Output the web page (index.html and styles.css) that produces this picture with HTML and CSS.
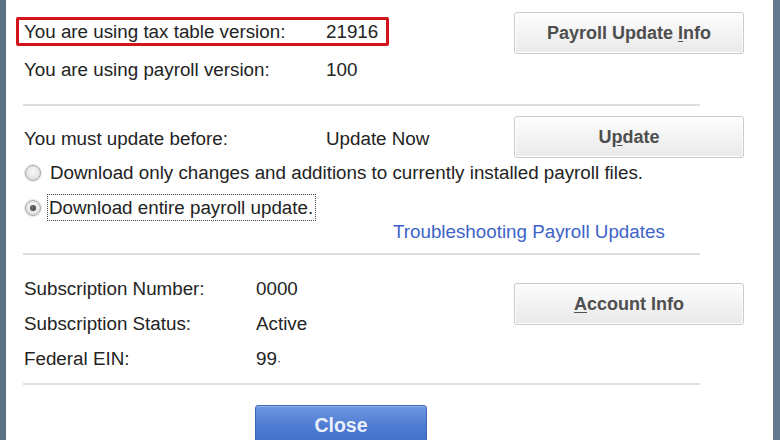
FILE: index.html
```html
<!DOCTYPE html>
<html>
<head>
<meta charset="utf-8">
<link rel="stylesheet" href="styles.css">
</head>
<body>
<div class="window">
  <div class="edge"></div>
  <div class="panel">
    <section class="sec sec1">
      <div class="col">
        <div class="row hl"><span class="lbl">You are using tax table version:</span><span>21916</span></div>
        <div class="row r2"><span class="lbl">You are using payroll version:</span><span>100</span></div>
      </div>
      <button class="btn b1">Payroll Update <u>I</u>nfo</button>
    </section>
    <div class="sep"></div>
    <section class="sec sec2">
      <div class="col">
        <div class="row ra"><span class="lbl">You must update before:</span><span>Update Now</span></div>
        <div class="row rb"><span class="radio"></span><span class="rtext">Download only changes and additions to currently installed payroll files.</span></div>
        <div class="row rc"><span class="radio on"></span><span class="rtext focus">Download entire payroll update.</span></div>
        <div class="row rd"><a class="link">Troubleshooting Payroll Updates</a></div>
      </div>
      <button class="btn b2">U<u>p</u>date</button>
    </section>
    <div class="sep"></div>
    <section class="sec sec3">
      <div class="col">
        <div class="row s1"><span class="lbl2">Subscription Number:</span><span>0000</span></div>
        <div class="row s2"><span class="lbl2">Subscription Status:</span><span>Active</span></div>
        <div class="row s3"><span class="lbl2">Federal EIN:</span><span>99<span class="dot">·</span></span></div>
      </div>
      <button class="btn b3"><u>A</u>ccount Info</button>
    </section>
    <div class="sep"></div>
    <div class="foot"><button class="close">Close</button></div>
  </div>
  <div class="edge right"></div>
</div>
</body>
</html>
```

FILE: styles.css
```css
html, body { margin: 0; padding: 0; }
body {
  width: 780px; height: 440px; overflow: hidden;
  font-family: "Liberation Sans", Arial, sans-serif;
  font-size: 18.8px; color: #232323; background: #fff;
}
.window { display: flex; height: 440px; }
.edge { width: 6px; flex: none; background: #5d7186; }
.edge.right { width: 7px; background: #66788c; }
.panel { flex: 1; background: #fff; overflow: hidden; }
.sec { display: flex; align-items: flex-start; }
.col { width: 508px; flex: none; box-sizing: border-box; padding-left: 18px; }
.row { display: flex; align-items: center; white-space: nowrap; }
.lbl { width: 302px; flex: none; }
.lbl2 { width: 232px; flex: none; }

.sec1 .col { padding-top: 17px; }
.hl {
  height: 23px; border: 3px solid #d3141c; border-radius: 2px;
  margin-left: -8px; padding-left: 5px; width: 362px;
}
.r2 { height: 35px; margin-top: 6px; }

.sep { height: 2px; background: #dedede; margin: 17px 0 0 17px; width: 677px; }

.sec2 .col { padding-top: 16px; }
.ra { height: 34px; }
.rb { height: 33px; }
.rc { height: 37px; }
.rd { height: 12px; }
.sec2 + .sep { margin-top: 15px; }
.radio {
  width: 14px; height: 14px; border-radius: 50%; flex: none;
  border: 1px solid #a9a9a9; margin: 0 9px 0 1px;
  background: radial-gradient(circle at 50% 40%, #fafafa 0%, #e4e4e4 60%, #cfcfcf 100%);
  display: flex; align-items: center; justify-content: center;
  box-shadow: 0 0 0 1px #e6e6e6;
}
.radio.on::after {
  content: ""; width: 6px; height: 6px; border-radius: 50%;
  background: radial-gradient(circle at 40% 40%, #777, #2a2a2a);
}
.focus { outline: 1px dotted #444; outline-offset: 0; padding: 1px 2px 1px 1px; margin-left: -2px; line-height: 23px; }
.link { color: #3d63c9; margin-left: 369px; text-decoration: none; }

.sec3 .col { padding-top: 17px; }
.s1 { height: 34px; }
.s2 { height: 35px; }
.s3 { height: 35px; }
.sec3 + .sep { margin-top: 7px; }
.dot { font-size: 12px; }

.btn {
  flex: none; width: 230px; height: 42px; margin-left: 0;
  border: 1px solid #c9c9c9; border-radius: 3px;
  background: linear-gradient(#fdfdfd, #f3f3f3 50%, #e9e9e9);
  font-family: "Liberation Sans", Arial, sans-serif;
  font-weight: bold; font-size: 18px; color: #4e4e4e;
  box-shadow: inset 0 0 0 1px #fff;
  padding: 0;
}
.btn u { text-underline-offset: 2px; }
.b1 { margin-top: 12px; }
.b2 { margin-top: 10px; }
.b3 { margin-top: 28px; }

.foot { padding: 20px 0 0 249px; }
.close {
  width: 172px; height: 42px; border: 1px solid #3e67b8; border-radius: 3px 3px 0 0;
  background: linear-gradient(#7098e0, #4f7cd3 50%, #3f6cc6);
  color: #e9effb; font-family: "Liberation Sans", Arial, sans-serif;
  font-weight: bold; font-size: 19.5px; padding: 0 0 1px 0;
  box-shadow: inset 0 1px 0 #8fb0ea;
}
```
